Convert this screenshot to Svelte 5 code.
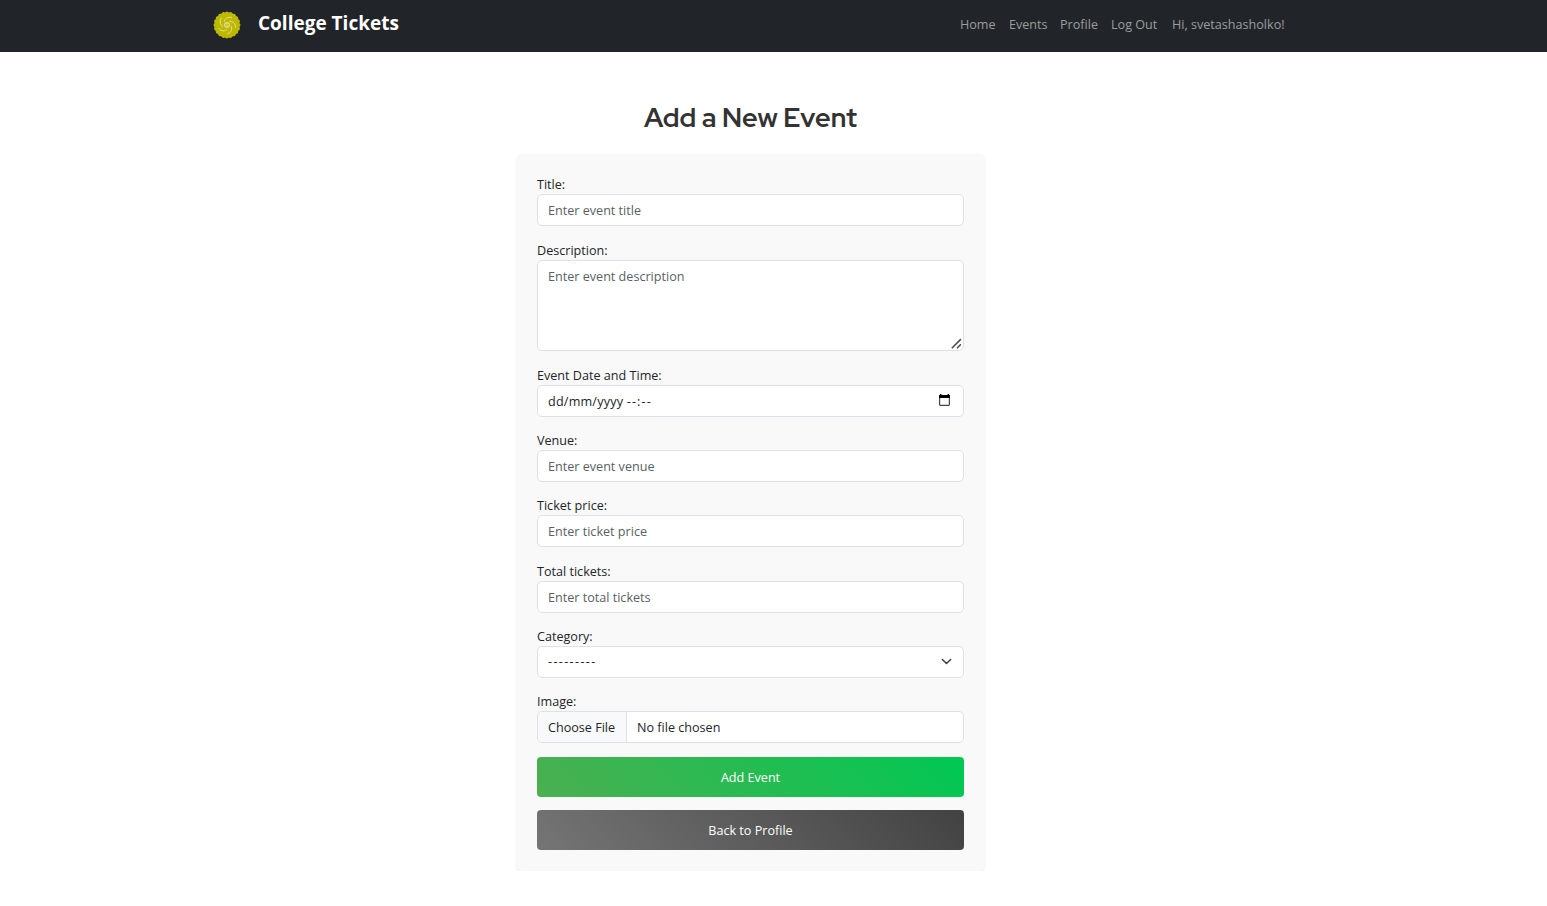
<script>
  const links = [
    { text: 'Home', w: 36 },
    { text: 'Events', w: 38 },
    { text: 'Profile', w: 38 },
    { text: 'Log Out', w: 48 },
    { text: 'Hi, svetashasholko!', w: 112 }
  ];
  const scallops = Array.from({ length: 20 }, (_, i) => i * 18);
  const arms = [0, 72, 144, 216, 288];
</script>

<header>
  <div class="bar">
    <a class="brand" href="#home">
      <svg width="28" height="28" viewBox="0 0 28 28">
        <circle cx="14" cy="14" r="12.7" fill="#bdb800" />
        {#each scallops as a}
          <circle cx="14" cy="2.2" r="1.7" fill="#bdb800" transform="rotate({a} 14 14)" />
        {/each}
        {#each arms as a}
          <path d="M11.4 10.4C11.6 7.8 14.6 5.4 18.6 6.4" fill="none" stroke="#e8e591" stroke-width=".9" stroke-linecap="round" transform="rotate({a} 14 14)" />
        {/each}
        <rect x="11.7" y="11.8" width="4.6" height="4.4" rx="1.4" fill="#d5d161" stroke="#eeebaa" stroke-width=".8" />
        <path d="M12 14h4" stroke="#bdb800" stroke-width=".7" />
      </svg>
      <span>College Tickets</span>
    </a>
    <nav>
      {#each links as l}
        <a href="#nav" style="width:{l.w}px">{l.text}</a>
      {/each}
    </nav>
  </div>
</header>

<main>
  <h1>Add a New Event</h1>
  <form>
    <div class="row">
      <label for="title">Title:</label>
      <input id="title" placeholder="Enter event title" />
    </div>
    <div class="row">
      <label for="desc">Description:</label>
      <div class="area">
        <textarea id="desc" placeholder="Enter event description"></textarea>
        <svg class="grip" width="11" height="11" viewBox="0 0 11 11">
          <path d="M.8 10.2 9.9 1.1M6 10.2 9.9 6.3" stroke="#505055" stroke-width="1.6" fill="none" />
        </svg>
      </div>
    </div>
    <div class="row">
      <span class="label">Event Date and Time:</span>
      <div class="control date">
        <span>dd/mm/yyyy <i>--:--</i></span>
        <svg width="11" height="12" viewBox="0 0 11 12">
          <rect x=".6" y="1.6" width="9.8" height="9.8" rx=".8" fill="none" stroke="#444" stroke-width="1.2" />
          <path d="M0 2q0-1 1-1V0h1.4v1h6.2V0H10v1q1 0 1 1v2H0z" fill="#000" />
        </svg>
      </div>
    </div>
    <div class="row">
      <label for="venue">Venue:</label>
      <input id="venue" placeholder="Enter event venue" />
    </div>
    <div class="row">
      <label for="price">Ticket price:</label>
      <input id="price" placeholder="Enter ticket price" />
    </div>
    <div class="row">
      <label for="total">Total tickets:</label>
      <input id="total" class="low" placeholder="Enter total tickets" />
    </div>
    <div class="row">
      <span class="label">Category:</span>
      <div class="control select">
        <span class="dashes">---------</span>
        <svg width="11" height="11" viewBox="0 0 16 16">
          <path d="m2 5 6 6 6-6" fill="none" stroke="#343a40" stroke-width="2" stroke-linecap="round" stroke-linejoin="round" />
        </svg>
      </div>
    </div>
    <div class="row">
      <span class="label">Image:</span>
      <div class="control file">
        <span class="choose">Choose File</span>
        <span class="none">No file chosen</span>
      </div>
    </div>
    <button type="button" class="add">Add Event</button>
    <button type="button" class="back">Back to Profile</button>
  </form>
</main>

<style>
  :global(body) {
    background: #fff;
    color: #212529;
    font: 12.6px/20px 'Segoe UI', 'Open Sans', 'Noto Sans', sans-serif;
    overflow: hidden;
  }
  * { box-sizing: border-box; }
  header { height: 52px; background: #212529; }
  .bar {
    width: 1071px;
    height: 50px;
    margin-left: 213px;
    display: flex;
    align-items: center;
    justify-content: space-between;
  }
  a { text-decoration: none; white-space: nowrap; }
  .brand {
    display: flex;
    align-items: center;
    gap: 17px;
    color: #fff;
    font-size: 19px;
    font-weight: 700;
    line-height: 28px;
  }
  .brand span { padding-bottom: 4px; }
  nav { display: flex; gap: 13px; }
  nav a { color: #9b9d9e; }
  main { width: 1501px; }
  h1 {
    margin: 0;
    padding-top: 48px;
    height: 102.2px;
    text-align: center;
    color: #333;
    font: 700 27px/36px 'Red Hat Display', Montserrat, Inter, sans-serif;
    letter-spacing: 0.04px;
  }
  form {
    width: 467px;
    height: 716.5px;
    margin: 0 auto;
    padding: 20px;
    background: #f9f9f9;
    border-radius: 5px;
    box-shadow: 0 1.7px 3.4px rgba(0, 0, 0, 0.08);
  }
  .row { margin-bottom: 13.33px; }
  label, .label { display: block; height: 20px; line-height: 22px; }
  input, textarea, .control {
    display: block;
    width: 100%;
    height: 32px;
    margin: 0;
    padding: 5px 10px;
    border: 1px solid #dee2e6;
    border-radius: 5px;
    background: #fff;
    color: #212529;
    font: inherit;
    outline: none;
  }
  ::placeholder { color: #595f65; opacity: 1; }
  .area { position: relative; height: 91.84px; }
  textarea { height: 100%; resize: none; padding-top: 6px; }
  .low { padding: 6px 10px 4px; }
  .grip { position: absolute; right: 2px; bottom: 2px; }
  .control { display: flex; align-items: center; justify-content: space-between; }
  .date { padding-right: 13px; }
  .date span { padding-top: 2px; letter-spacing: 0.2px; }
  .date i { font-style: normal; letter-spacing: 1.15px; }
  .date svg { margin-top: -2px; }
  .dashes { letter-spacing: 1.35px; }
  .select { padding-right: 11px; }
  .file { padding: 0; justify-content: flex-start; overflow: hidden; }
  .choose {
    width: 89px;
    height: 30px;
    line-height: 32px;
    padding-left: 10px;
    background: #f8f9fa;
    border-right: 1px solid #dee2e6;
  }
  .none { padding: 2px 0 0 10px; }
  button {
    display: block;
    width: 100%;
    height: 40px;
    margin: 0 0 13.33px;
    padding: 2px 0 0;
    border: 0;
    border-radius: 4px;
    color: #fff;
    font: inherit;
    font-weight: 500;
  }
  .add { background: linear-gradient(45deg, #4caf50, #00c853); }
  .back { background: linear-gradient(45deg, #757575, #424242); }
</style>
